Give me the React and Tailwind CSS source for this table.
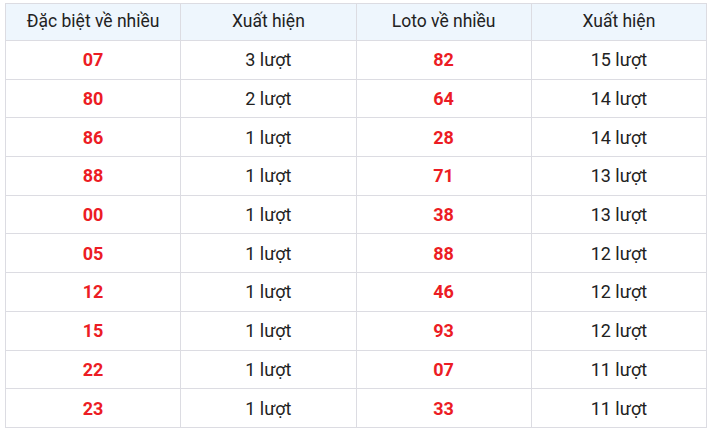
import React from "react";

const rows = [
  ["07", "3 lượt", "82", "15 lượt"],
  ["80", "2 lượt", "64", "14 lượt"],
  ["86", "1 lượt", "28", "14 lượt"],
  ["88", "1 lượt", "71", "13 lượt"],
  ["00", "1 lượt", "38", "13 lượt"],
  ["05", "1 lượt", "88", "12 lượt"],
  ["12", "1 lượt", "46", "12 lượt"],
  ["15", "1 lượt", "93", "12 lượt"],
  ["22", "1 lượt", "07", "11 lượt"],
  ["23", "1 lượt", "33", "11 lượt"],
];

export default function App() {
  return (
    <div className="w-[712px] h-[435px] bg-white pt-[3px] px-[5px]" style={{ fontFamily: "Roboto, 'Noto Sans', sans-serif" }}>
      <table className="w-[702px] border-collapse table-fixed text-center">
        <thead>
          <tr className="h-[37px] bg-[#eef6fd]">
            {["Đặc biệt về nhiều", "Xuất hiện", "Loto về nhiều", "Xuất hiện"].map((h, i) => (
              <th key={i} className="border border-[#dcdce2] font-normal text-[17.5px] text-[#222] p-0 leading-none">
                {h}
              </th>
            ))}
          </tr>
        </thead>
        <tbody>
          {rows.map((r, i) => (
            <tr key={i} className="h-[38.7px]">
              <td className="border border-[#dcdce2] font-bold text-[18px] text-[#ec1c24] p-0">{r[0]}</td>
              <td className="border border-[#dcdce2] text-[18px] text-[#222] p-0">{r[1]}</td>
              <td className="border border-[#dcdce2] font-bold text-[18px] text-[#ec1c24] p-0">{r[2]}</td>
              <td className="border border-[#dcdce2] text-[18px] text-[#222] p-0">{r[3]}</td>
            </tr>
          ))}
        </tbody>
      </table>
    </div>
  );
}
